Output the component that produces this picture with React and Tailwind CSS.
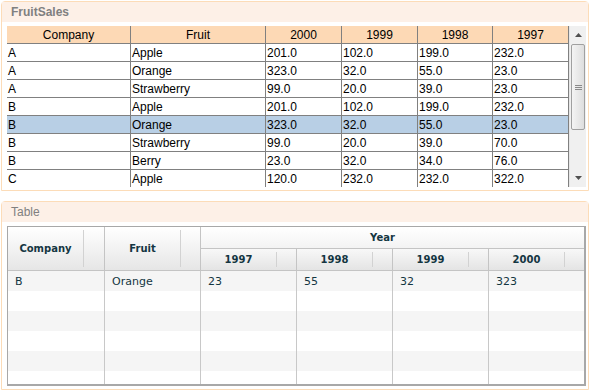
const sales = [
  ["A", "Apple", "201.0", "102.0", "199.0", "232.0"],
  ["A", "Orange", "323.0", "32.0", "55.0", "23.0"],
  ["A", "Strawberry", "99.0", "20.0", "39.0", "23.0"],
  ["B", "Apple", "201.0", "102.0", "199.0", "232.0"],
  ["B", "Orange", "323.0", "32.0", "55.0", "23.0"],
  ["B", "Strawberry", "99.0", "20.0", "39.0", "70.0"],
  ["B", "Berry", "23.0", "32.0", "34.0", "76.0"],
  ["C", "Apple", "120.0", "232.0", "232.0", "322.0"],
];

const headers = ["Company", "Fruit", "2000", "1999", "1998", "1997"];
const widths = ["w-[124px]", "w-[135px]", "w-[76px]", "w-[76px]", "w-[75px]", "w-[76px]"];

const Panel = ({ title, bold, className, children }) => (
  <div className={`w-[588px] border border-[#fcdcb8] rounded-t-[4px] bg-white ${className}`}>
    <div
      className={`h-[20px] bg-[#fdf0e7] pl-[9px] text-[12px] leading-[21px] text-[#808080] ${
        bold ? "font-bold" : ""
      }`}
    >
      {title}
    </div>
    {children}
  </div>
);

const Scrollbar = () => (
  <div className="w-[17px] h-full bg-[#f0f0f0] border-l border-[#e6e6e6] flex flex-col items-center">
    <div className="h-[18px] w-full flex items-center justify-center">
      <svg width="7" height="4" viewBox="0 0 7 4">
        <path d="M0 4 L3.5 0 L7 4 Z" fill="#505050" />
      </svg>
    </div>
    <div className="w-[14px] h-[86px] rounded-[2px] border border-[#a0a0a0] bg-linear-to-r from-[#f4f4f4] to-[#dedede] flex flex-col items-center justify-center gap-[1px]">
      <div className="w-[7px] h-px bg-[#8a8a8a]" />
      <div className="w-[7px] h-px bg-[#8a8a8a]" />
      <div className="w-[7px] h-px bg-[#8a8a8a]" />
    </div>
    <div className="flex-1" />
    <div className="h-[18px] w-full flex items-center justify-center">
      <svg width="7" height="4" viewBox="0 0 7 4">
        <path d="M0 0 L7 0 L3.5 4 Z" fill="#505050" />
      </svg>
    </div>
  </div>
);

const SalesGrid = () => (
  <div className="flex h-[161px] overflow-hidden font-['Liberation_Sans',Arial,sans-serif] text-[12px] text-black">
    <div className="w-[562px] flex flex-col">
      <div className="flex h-[18px] shrink-0 bg-[#fdd9b5] border-b border-[#808080]">
        {headers.map((h, i) => (
          <div
            key={h}
            className={`${widths[i]} shrink-0 border-r border-[#808080] text-center leading-[19px]`}
          >
            {h}
          </div>
        ))}
      </div>
      {sales.map((row, r) => (
        <div
          key={r}
          className={`flex h-[18px] shrink-0 border-b border-[#808080] ${
            r === 4 ? "bg-[#b8cfe5]" : ""
          }`}
        >
          {row.map((c, i) => (
            <div
              key={i}
              className={`${widths[i]} shrink-0 border-r border-[#808080] pl-[1px] leading-[19px]`}
            >
              {c}
            </div>
          ))}
        </div>
      ))}
    </div>
    <Scrollbar />
  </div>
);

const HeadCell = ({ label, spacer }) => (
  <div className="flex h-full">
    <div className="flex-1 flex items-center justify-center">{label}</div>
    <div className="w-px my-[3px] bg-[#d2d2d2]" />
    <div className={spacer} />
  </div>
);

const years = ["1997", "1998", "1999", "2000"];
const yearWidths = ["w-[96px] border-r", "w-[96px] border-r", "w-[96px] border-r", "w-[95px]"];

const PivotTable = () => (
  <div className="h-[160px] border border-[#a8a8a8] border-b-2 border-r-2 overflow-hidden font-['DejaVu_Sans',Verdana,sans-serif] text-[#143642]">
    <div className="flex h-[44px] border-b border-[#c4c4c4] text-[10px] font-bold">
      <div className="w-[97px] border-r border-[#c4c4c4] bg-linear-to-b from-white to-[#e6e6e6]">
        <HeadCell label="Company" spacer="w-[20px]" />
      </div>
      <div className="w-[96px] border-r border-[#c4c4c4] bg-linear-to-b from-white to-[#e6e6e6]">
        <HeadCell label="Fruit" spacer="w-[19px]" />
      </div>
      <div className="flex-1 flex flex-col">
        <div className="h-[22px] border-b border-[#c4c4c4] bg-linear-to-b from-white to-[#f3f3f3] pr-[20px] flex items-center justify-center">
          Year
        </div>
        <div className="flex flex-1 bg-linear-to-b from-[#f8f8f8] to-[#e4e4e4]">
          {years.map((y, i) => (
            <div key={y} className={`${yearWidths[i]} border-[#c4c4c4]`}>
              <HeadCell label={y} spacer="w-[19px]" />
            </div>
          ))}
        </div>
      </div>
    </div>
    {[0, 1, 2, 3, 4, 5].map((r) => (
      <div
        key={r}
        className={`flex h-[20px] text-[11px] ${r % 2 === 0 ? "bg-[#f5f5f5]" : "bg-white"}`}
      >
        {["B", "Orange", "23", "55", "32", "323"].map((v, i) => (
          <div
            key={i}
            className={`${
              ["w-[97px]", "w-[96px]", "w-[96px]", "w-[96px]", "w-[96px]", "w-[94px]"][i]
            } ${i < 5 ? "border-r" : ""} border-[#c8c8c8] pl-[7px] leading-[21px]`}
          >
            {r === 0 ? v : ""}
          </div>
        ))}
      </div>
    ))}
  </div>
);

export default function App() {
  return (
    <div className="w-[592px] h-[392px] bg-white pt-[1px] pl-[1px] font-['Liberation_Sans',Arial,sans-serif]">
      <Panel title="FruitSales" bold className="h-[190px]">
        <div className="pl-[5px] pt-[4px]">
          <SalesGrid />
        </div>
      </Panel>
      <Panel title="Table" className="h-[189px] mt-[10px]">
        <div className="pl-[5px] pt-[4px] pr-[2px]">
          <PivotTable />
        </div>
      </Panel>
    </div>
  );
}
